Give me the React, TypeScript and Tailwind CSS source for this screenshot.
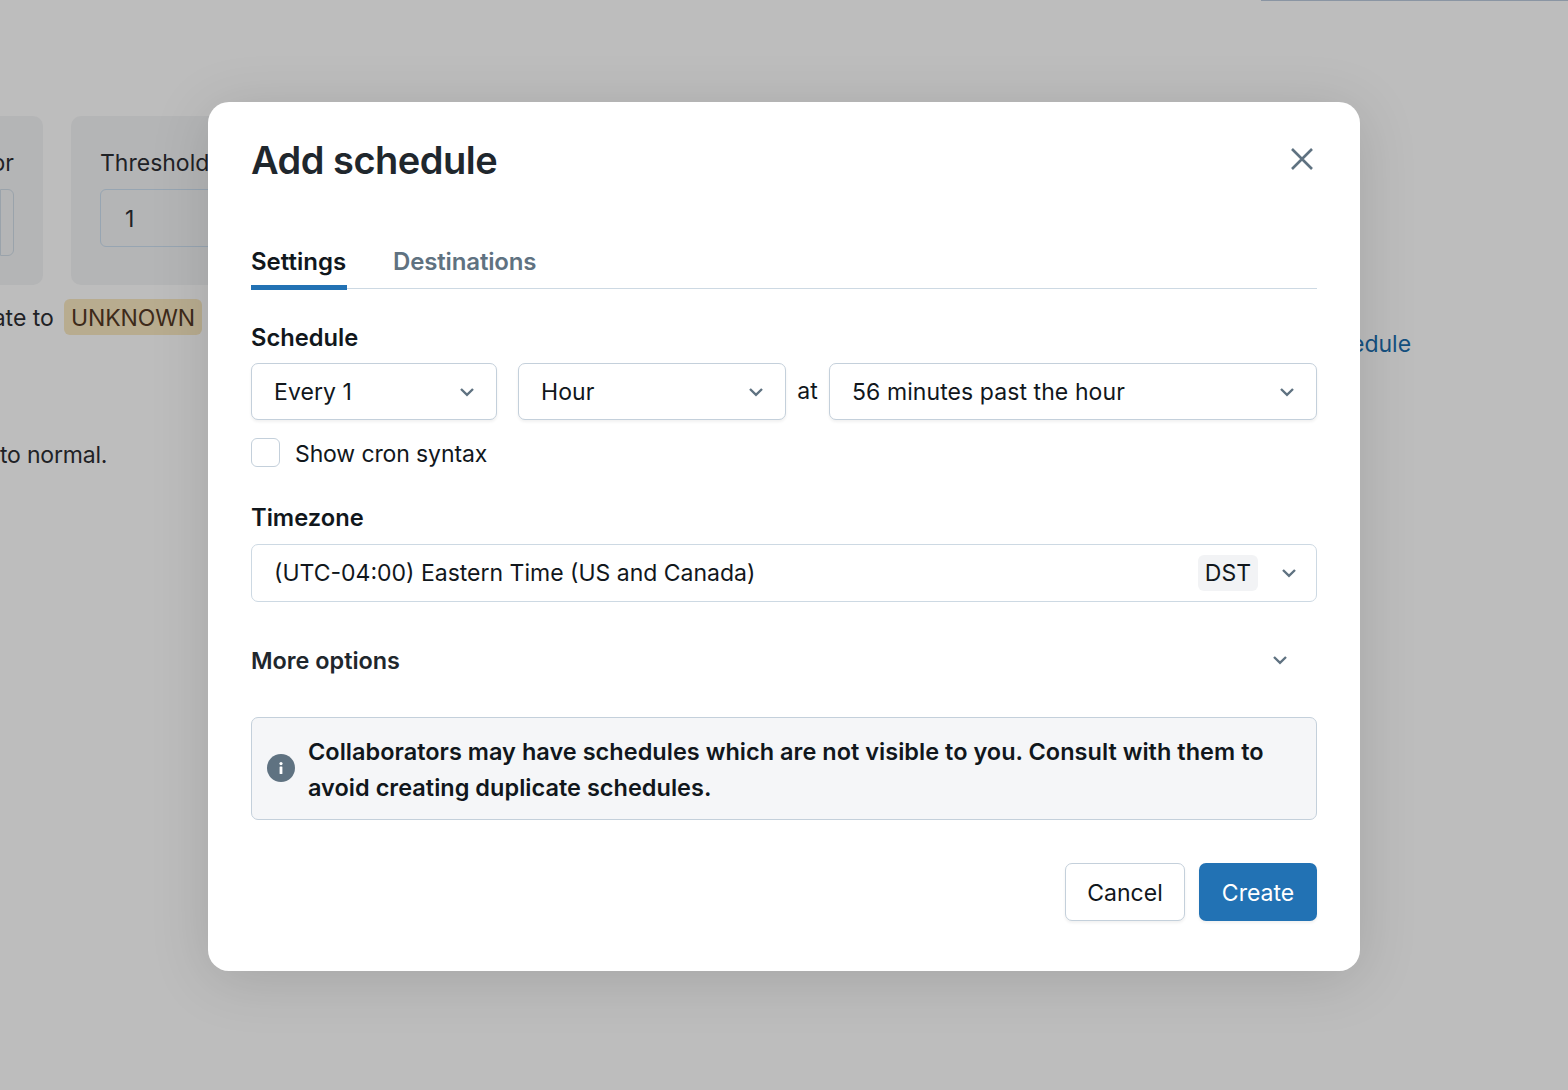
function Chevron({ className }: { className: string }) {
  return (
    <svg width="16" height="16" viewBox="0 0 16 16" fill="none" className={className}>
      <path d="M2 5 8 10.8 14 5" stroke="#5f7281" strokeWidth="2.4" />
    </svg>
  );
}

function Select({ label, className }: { label: string; className: string }) {
  return (
    <div
      className={`flex h-[57px] items-center justify-between rounded-[7px] border border-[#c4d0db] bg-white pl-[22px] pr-[21px] shadow-[0_2px_3px_rgba(0,0,0,0.06)] ${className}`}
    >
      <span className="pt-[2px] tracking-[0.08px]">{label}</span>
      <Chevron className="shrink-0" />
    </div>
  );
}

function Background() {
  return (
    <div className="h-[1090px] overflow-hidden bg-[#bdbdbd] text-[23px] text-[#1f2226]">
      <div className="ml-auto h-px w-[307px] bg-[#8a95a3]" />
      <div className="mt-[115px] flex gap-[28px]">
        <div className="h-[169px] w-[43px] overflow-hidden rounded-r-[10px] bg-[#b4b5b6]">
          <div className="flex justify-end pr-[29px] pt-[31px]">
            <span className="whitespace-nowrap leading-[32px]">Operator</span>
          </div>
          <div className="mt-[10px] h-[67px] w-[14px] rounded-r-[6px] border border-[#9aa3ab]" />
        </div>
        <div className="h-[169px] w-[300px] rounded-[10px] bg-[#b4b5b6] pl-[29px] pt-[31px]">
          <div className="leading-[32px]">Threshold</div>
          <div className="mt-[10px] flex h-[58px] items-center rounded-[6px] border border-[#97a5b2] pl-[24px] pt-[2px]">1</div>
        </div>
      </div>
      <div className="mt-[14px] flex h-[36px] w-[202px] items-center justify-end">
        <span className="mr-[10px] whitespace-nowrap pt-[2px]">ate to</span>
        <span className="rounded-[6px] bg-[#b8ac8f] px-[7px] pt-[2px] leading-[34px] tracking-[-0.1px] text-[#3d2a1a]">UNKNOWN</span>
      </div>
      <div className="mt-[102px] whitespace-nowrap leading-[36px] tracking-[-0.2px]">to normal.</div>
    </div>
  );
}

export default function App() {
  return (
    <div className="relative h-[1090px] overflow-hidden font-['Inter',sans-serif]">
      <Background />
      <span className="absolute left-[1351px] top-[326px] text-[23px] leading-[36px] text-[#14507f]">edule</span>

      <div className="absolute inset-0 flex justify-center pt-[102px]">
        <div className="h-[869px] w-[1152px] rounded-[21px] bg-white px-[43px] pt-[32px] text-[23px] text-[#11171c] shadow-[0_8px_60px_rgba(0,0,0,0.13)]">
          <div className="flex items-center justify-between">
            <h1 className="text-[38px] font-semibold leading-[52px] tracking-[-0.5px] text-[#1f272d]">Add schedule</h1>
            <svg width="24" height="24" viewBox="0 0 24 24" fill="none" className="mb-[2px] mr-[3px]">
              <path d="M2 2 22 22M22 2 2 22" stroke="#5f7281" strokeWidth="2.6" />
            </svg>
          </div>

          <div className="mt-[52px] flex h-[51px] gap-[46px] border-b border-[#cdd9e3] text-[24px] font-semibold">
            <div className="h-[52px] w-[96px] border-b-[5px] border-[#2272b4] leading-[47px]">Settings</div>
            <div className="leading-[47px] tracking-[-0.15px] text-[#5f7281]">Destinations</div>
          </div>

          <div className="mt-[31px] text-[23.7px] font-semibold leading-[36px]">Schedule</div>
          <div className="mt-[7px] flex items-center">
            <Select label="Every 1" className="w-[246px]" />
            <Select label="Hour" className="ml-[21px] w-[268px]" />
            <span className="w-[43px] text-center">at</span>
            <Select label="56 minutes past the hour" className="w-[488px]" />
          </div>

          <div className="mt-[18px] flex h-[29px] items-center gap-[15px]">
            <div className="h-[29px] w-[29px] rounded-[6px] border border-[#c4d0db] bg-white" />
            <span className="pt-[3px] tracking-[-0.12px]">Show cron syntax</span>
          </div>

          <div className="mt-[33px] text-[23.7px] font-semibold leading-[36px]">Timezone</div>
          <div className="mt-[8px] flex h-[58px] items-center rounded-[7px] border border-[#cdd9e3] pl-[22px] pr-[19px]">
            <span className="flex-1">(UTC-04:00) Eastern Time (US and Canada)</span>
            <span className="rounded-[6px] bg-[#f2f3f5] px-[7px] leading-[36px]">DST</span>
            <Chevron className="ml-[23px]" />
          </div>

          <div className="mt-[41px] flex h-[36px] items-center justify-between pr-[29px] text-[23.4px] font-semibold text-[#1f272d]">
            <span>More options</span>
            <Chevron className="mb-[2px]" />
          </div>

          <div className="mt-[38px] flex h-[103px] items-center gap-[13px] rounded-[7px] border border-[#c4d0db] bg-[#f5f6f8] pl-[15px] pr-[20px] text-[23.5px] font-semibold leading-[36px]">
            <svg width="28" height="28" viewBox="0 0 28 28" className="mb-[1px] shrink-0">
              <circle cx="14" cy="14" r="14" fill="#5f7281" />
              <rect x="12.6" y="12.4" width="2.8" height="7.6" rx="0.6" fill="#fff" />
              <circle cx="14" cy="9.6" r="1.6" fill="#fff" />
            </svg>
            <p className="pt-[2px] tracking-[0.02px]">Collaborators may have schedules which are not visible to you. Consult with them to avoid creating duplicate schedules.</p>
          </div>

          <div className="mt-[43px] flex justify-end gap-[14px]">
            <button className="h-[58px] w-[120px] rounded-[7px] border border-[#c4d0db] bg-white pt-[2px] shadow-[0_2px_3px_rgba(0,0,0,0.06)]">Cancel</button>
            <button className="h-[58px] w-[118px] rounded-[7px] bg-[#2272b4] pt-[2px] text-white shadow-[0_2px_3px_rgba(0,0,0,0.06)]">Create</button>
          </div>
        </div>
      </div>
    </div>
  );
}
